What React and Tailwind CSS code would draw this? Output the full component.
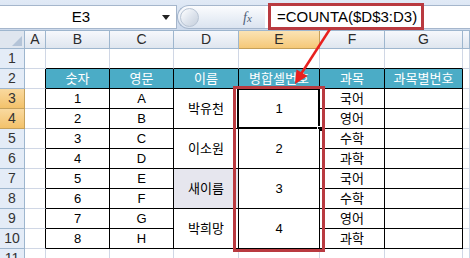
export default function App() {
    const data = [
        { n: "1", c: "A", f: "국어" },
        { n: "2", c: "B", f: "영어" },
        { n: "3", c: "C", f: "수학" },
        { n: "4", c: "D", f: "과학" },
        { n: "5", c: "E", f: "국어" },
        { n: "6", c: "F", f: "수학" },
        { n: "7", c: "G", f: "영어" },
        { n: "8", c: "H", f: "과학" },
    ];
    const names = ["박유천", "이소원", "새이름", "박희망"];

    const grid = "border-r border-b border-[#d0d7e5] bg-white";
    const cell = "border-r border-b border-black bg-white flex items-center justify-center text-[13px] text-black";
    const rowHdr = "border-r border-b border-[#9eb6ce] bg-[#e4ecf7] flex items-center justify-center text-[14px] text-[#333]";
    const rowHdrSel = "border-r border-b border-[#c5a05a] bg-gradient-to-b from-[#f9d99f] to-[#f3c26a] flex items-center justify-center text-[14px] text-[#333]";
    const colHdr = "border-r border-b border-[#9eb6ce] bg-gradient-to-b from-[#f6f8fc] to-[#dfe6ef] flex items-center justify-center text-[14px] text-[#2b2b2b]";
    const colHdrSel = "border-r border-b border-[#c5a05a] bg-gradient-to-b from-[#fbe3b4] to-[#f5c877] flex items-center justify-center text-[14px] text-[#2b2b2b]";
    const head = "border-r border-b border-black bg-[#4bacc6] flex items-center justify-center text-[13px] text-white";

    return (
        <div className="relative w-[470px] h-[258px] overflow-hidden bg-white font-['Liberation_Sans','Noto_Sans_CJK_KR',sans-serif]">
            {/* formula bar */}
            <div className="h-[31px] flex items-start pt-[5px] bg-gradient-to-b from-[#e1eaf6] to-[#cddaec] border-b border-[#9eb6ce]">
                <div className="relative w-[177px] h-[24px] bg-white border-y border-r border-[#a5b6cc] flex items-center justify-center">
                    <span className="text-[15px] text-black ml-[-14px]">E3</span>
                    <svg className="absolute left-[162px] top-[9px]" width="8" height="5" viewBox="0 0 8 5">
                        <path d="M0 0 L8 0 L4 5 Z" fill="#222" />
                    </svg>
                </div>
                <div className="relative w-[88px] h-[24px] rounded-l-full border border-r-0 border-[#a5b6cc] bg-gradient-to-b from-[#fbfcfe] to-[#dbe4f0] flex items-center">
                    <div className="ml-[2px] w-[19px] h-[19px] rounded-full border border-[#b8c4d4] bg-gradient-to-br from-white via-[#dfe5ee] to-[#c7d0dc]" />
                    <span className="ml-[44px] italic text-[14px] text-[#4f6179] font-['Liberation_Serif',serif]">
                        f<span className="text-[11px]">x</span>
                    </span>
                </div>
                <div className="flex-1 h-[24px] bg-white border-y border-[#a5b6cc] flex items-center pl-[12px] text-[15px] text-black">
                    =COUNTA($D$3:D3)
                </div>
            </div>

            {/* sheet */}
            <div className="grid grid-cols-[25px_21px_64px_64px_65px_81px_65px_78px_1fr] grid-rows-[18px_repeat(10,20px)_20px]">
                <div className="relative border-r border-b border-[#9eb6ce] bg-[#dfe6ef]">
                    <svg className="absolute right-[2px] bottom-[2px]" width="10" height="10" viewBox="0 0 10 10">
                        <path d="M10 0 L10 10 L0 10 Z" fill="#b4c4d8" />
                    </svg>
                </div>
                <div className={colHdr}>A</div>
                <div className={colHdr}>B</div>
                <div className={colHdr}>C</div>
                <div className={colHdr}>D</div>
                <div className={colHdrSel}>E</div>
                <div className={colHdr}>F</div>
                <div className={colHdr}>G</div>
                <div className={colHdr}></div>

                {/* row 1 */}
                <div className={rowHdr}>1</div>
                <div className={grid}></div>
                <div className="border-r border-b border-[#d0d7e5] border-b-black bg-white"></div>
                <div className="border-r border-b border-[#d0d7e5] border-b-black bg-white"></div>
                <div className="border-r border-b border-[#d0d7e5] border-b-black bg-white"></div>
                <div className="border-r border-b border-[#d0d7e5] border-b-black bg-white"></div>
                <div className="border-r border-b border-[#d0d7e5] border-b-black bg-white"></div>
                <div className="border-r border-b border-[#d0d7e5] border-b-black bg-white"></div>
                <div className={grid}></div>

                {/* row 2 */}
                <div className={rowHdr}>2</div>
                <div className="border-r border-b border-[#d0d7e5] border-r-black bg-white"></div>
                <div className={head}>숫자</div>
                <div className={head}>영문</div>
                <div className={head}>이름</div>
                <div className={head}>병합셀번호</div>
                <div className={head}>과목</div>
                <div className={head}>과목별번호</div>
                <div className={grid}></div>

                {data.map((r, i) => (
                    <Row key={i} i={i} r={r} names={names} cell={cell} grid={grid} rowHdr={i < 2 ? rowHdrSel : rowHdr} />
                ))}

                {/* row 11 */}
                <div className={rowHdr}>11</div>
                <div className={grid}></div>
                <div className={grid}></div>
                <div className={grid}></div>
                <div className={grid}></div>
                <div className={grid}></div>
                <div className={grid}></div>
                <div className={grid}></div>
                <div className={grid}></div>
            </div>

            {/* red highlight boxes and arrow */}
            <div className="absolute left-[268px] top-[3px] w-[156px] h-[27px] border-[3px] border-[#b93a40]" />
            <div className="absolute left-[233px] top-[86px] w-[92px] h-[166px] border-[3px] border-[#b93a40]" />
            <svg className="absolute left-0 top-0" width="470" height="258" viewBox="0 0 470 258">
                <line x1="330" y1="29" x2="301" y2="74" stroke="#e8201f" strokeWidth="2.5" />
                <path d="M295 84 L307.5 76 L296.5 69.5 Z" fill="#e8201f" />
            </svg>
        </div>
    );
}

function Row({ i, r, names, cell, grid, rowHdr }) {
    const top = i % 2 === 0;
    const k = i / 2;
    return (
        <>
            <div className={rowHdr}>{i + 3}</div>
            <div className="border-r border-b border-[#d0d7e5] border-r-black bg-white"></div>
            <div className={cell}>{r.n}</div>
            <div className={cell}>{r.c}</div>
            {top && (
                <div className={k === 2
                    ? "row-span-2 border-r border-b border-black bg-[#e6e6ee] flex items-center justify-center text-[13px] text-black"
                    : "row-span-2 border-r border-b border-black bg-white flex items-center justify-center text-[13px] text-black"}>
                    {names[k]}
                </div>
            )}
            {top && (
                <div className="relative row-span-2 border-r border-b border-black bg-white flex items-center justify-center text-[13px] text-black">
                    {k + 1}
                    {i === 0 && (
                        <>
                            <div className="absolute -left-[2px] -top-px -right-px -bottom-px border-2 border-black" />
                            <div className="absolute -right-[4px] -bottom-[4px] w-[6px] h-[6px] bg-black border border-white" />
                        </>
                    )}
                </div>
            )}
            <div className={cell}>{r.f}</div>
            <div className={cell}></div>
            <div className={grid}></div>
        </>
    );
}
